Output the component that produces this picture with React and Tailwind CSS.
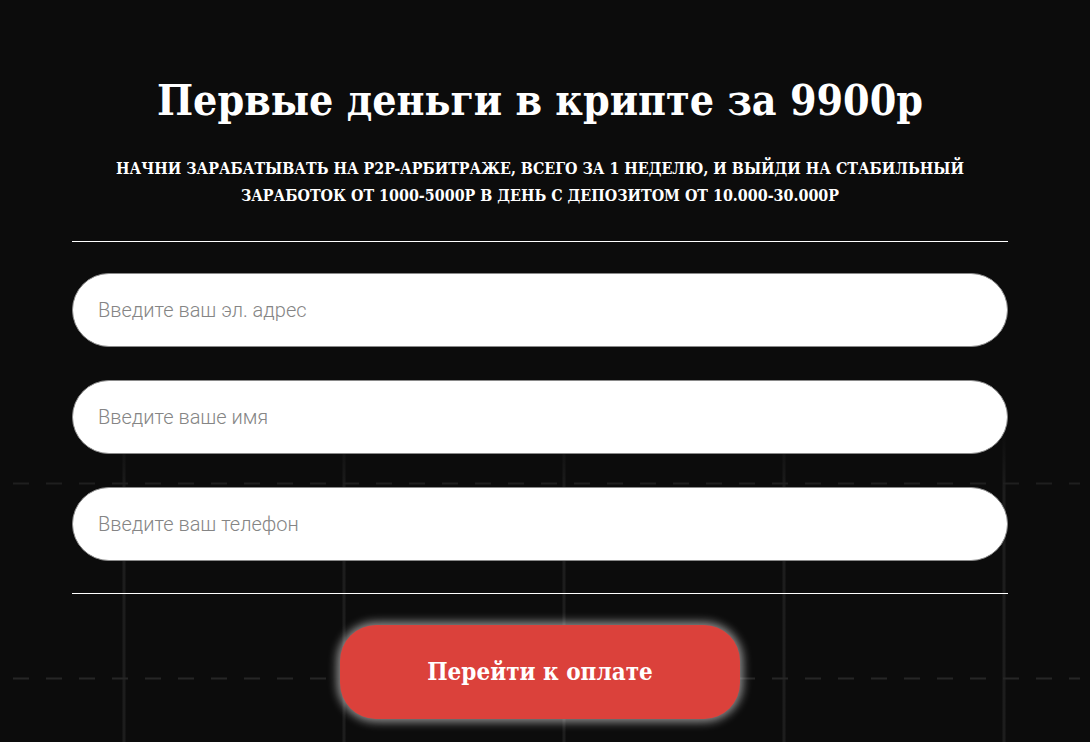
import React from "react";

function Grid() {
  const xs = [123.5, 343.5, 563.5, 783.5, 1003.5];
  return (
    <svg className="pointer-events-none absolute inset-0" width="1090" height="742" viewBox="0 0 1090 742">
      <defs>
        <linearGradient id="fade" x1="0" y1="0" x2="0" y2="1">
          <stop offset="0" stopColor="#1d1d1d" stopOpacity="0" />
          <stop offset="0.2" stopColor="#1d1d1d" stopOpacity="1" />
          <stop offset="1" stopColor="#1d1d1d" stopOpacity="1" />
        </linearGradient>
      </defs>
      {xs.map((x) => (
        <rect key={x} x={x - 1} y="430" width="3" height="312" fill="url(#fade)" />
      ))}
      <line x1="13" y1="483.5" x2="1080" y2="483.5" stroke="#1f1f1f" strokeWidth="2" strokeDasharray="16 17" />
      <line x1="13" y1="678.5" x2="1080" y2="678.5" stroke="#262626" strokeWidth="2" strokeDasharray="16 17" />
    </svg>
  );
}

const slab = { fontFamily: '"Roboto Slab", "DejaVu Serif Condensed", "DejaVu Serif", serif' };

function Field({ placeholder }) {
  return (
    <div className="h-[74px] w-full rounded-full border border-[#8a8a8a] bg-white flex items-center pl-[25px]">
      <span className="text-[20px] font-light text-[#858585]" style={{ fontFamily: 'Roboto, "Liberation Sans", sans-serif' }}>
        {placeholder}
      </span>
    </div>
  );
}

export default function App() {
  return (
    <div className="relative h-[742px] w-[1090px] overflow-hidden bg-[#0c0c0c]">
      <Grid />
      <div className="relative flex justify-center pr-[10px]">
        <div className="w-[936px] flex flex-col items-center pt-[72px]">
          <h1 className="text-[42.5px] font-bold leading-[56px] text-white" style={slab}>
            Первые деньги в крипте за 9900р
          </h1>
          <p className="mt-[27px] text-center text-[15.9px] font-bold uppercase leading-[27px] text-white" style={slab}>
            НАЧНИ ЗАРАБАТЫВАТЬ НА P2P-АРБИТРАЖЕ, ВСЕГО ЗА 1 НЕДЕЛЮ, И ВЫЙДИ НА СТАБИЛЬНЫЙ
            <br />
            ЗАРАБОТОК ОТ 1000-5000Р В ДЕНЬ С ДЕПОЗИТОМ ОТ 10.000-30.000Р
          </p>
          <div className="mt-[32px] h-px w-full bg-white" />
          <div className="mt-[31px] flex w-full flex-col gap-[33px]">
            <Field placeholder="Введите ваш эл. адрес" />
            <Field placeholder="Введите ваше имя" />
            <Field placeholder="Введите ваш телефон" />
          </div>
          <div className="mt-[32px] h-px w-full bg-white" />
          <button
            className="mt-[31px] h-[94px] w-[400px] rounded-[36px] bg-[#db413b] text-[24px] font-bold text-white shadow-[0_0_10px_3px_rgba(255,255,255,0.55)]"
            style={slab}
          >
            Перейти к оплате
          </button>
        </div>
      </div>
    </div>
  );
}
